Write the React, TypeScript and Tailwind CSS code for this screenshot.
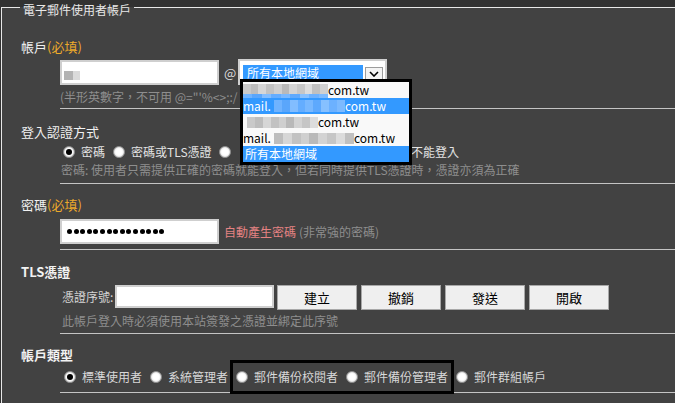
import React from 'react'

const GRAY_BLUR = ['#c9c9c9', '#bdbdbd', '#d6d6d6', '#c2c2c2', '#cfcfcf', '#b9b9b9', '#d3d3d3', '#c6c6c6', '#dcdcdc', '#c0c0c0', '#d0d0d0']
const BLUE_BLUR = ['#6fb3ff', '#5aa6fb', '#82bdff', '#64adff', '#78b8ff', '#5ea9fd', '#86c0ff', '#6cb1ff', '#7cbaff']

function Blur({ colors, width, height = 10 }: { colors: string[]; width: number; height?: number }) {
  const cell = width / colors.length
  return (
    <span className="flex shrink-0" style={{ width, height }}>
      {colors.map((c, i) => (
        <span key={i} style={{ width: cell, height, background: c }} />
      ))}
    </span>
  )
}

function Radio({ checked }: { checked?: boolean }) {
  return (
    <span className="flex h-[12px] w-[12px] shrink-0 items-center justify-center rounded-full border border-[#8a8a8a] bg-white shadow-[inset_0_0_2px_#bbb]">
      {checked && <span className="h-[6px] w-[6px] rounded-full bg-black" />}
    </span>
  )
}

function RadioItem({ label, checked }: { label: string; checked?: boolean }) {
  return (
    <span className="flex items-center gap-[6px]">
      <Radio checked={checked} />
      <span className="whitespace-nowrap">{label}</span>
    </span>
  )
}

function SectionLabel({ children, className }: { children: React.ReactNode; className: string }) {
  return <div className={`ml-[19px] text-[13px] leading-[16px] text-[#f2f2f2] ${className}`}>{children}</div>
}

const BUTTONS = ['建立', '撤銷', '發送', '開啟']

export default function App() {
  return (
    <div className="h-[403px] w-[675px] overflow-hidden bg-[#323232] pl-px pt-[7px] font-['Noto_Sans_CJK_TC','Noto_Sans',sans-serif]">
      <div className="relative h-[420px] w-[740px] border-l border-t border-[#e8e8e8] bg-[#424242]">
        {/* legend */}
        <span className="absolute left-[18px] top-[-6px] bg-[linear-gradient(to_bottom,#323232_5px,#424242_5px)] px-[3px] text-[12px] leading-[16px] text-[#e8e8e8]">
          電子郵件使用者帳戶
        </span>

        {/* 帳戶 */}
        <SectionLabel className="mt-[31px]">
          帳戶<span className="text-[#eeaa2a]">(必填)</span>
        </SectionLabel>
        <div className="ml-[58px] border-b border-[#c4c4c4] pb-[3px]">
          <div className="mt-[5px] flex items-start">
            <div className="flex h-[25px] w-[159px] items-center border-2 border-[#cfcfcf] bg-white pl-[2px]">
              <span className="mt-[5px] flex">
                <span className="h-[9px] w-[9px] bg-[#b3b3b3]" />
                <span className="h-[9px] w-[7px] bg-[#dadada]" />
              </span>
            </div>
            <span className="ml-[5px] mt-[4px] w-[12px] text-[13px] leading-[18px] text-[#dcdcdc]">@</span>
            <div className="relative ml-[2px] mt-[-1px] flex h-[26px] w-[149px] items-start border-2 border-[#cfcfcf] bg-white">
              <span className="ml-[3px] mt-[4px] h-[15px] w-[120px] bg-[#3399ff] pl-[4px] text-[12px] leading-[15px] text-white">
                所有本地網域
              </span>
              <span className="ml-[2px] mt-[6px] flex h-[14px] w-[18px] items-center justify-center border border-[#9c9c9c] bg-[#f4f4f4]">
                <svg width="10" height="6" viewBox="0 0 10 6">
                  <path d="M1 1l4 4 4-4" fill="none" stroke="#000" strokeWidth="1.6" />
                </svg>
              </span>

              {/* open dropdown list */}
              <div className="absolute left-0 top-[18px] z-10 w-[172px] border-[3px] border-black bg-[#f9f9f9] text-[12px] leading-[16px] text-black">
                <div className="flex h-[16px] items-start">
                  <span className="flex flex-col">
                    <span className="mt-[2px]">
                      <Blur colors={GRAY_BLUR} width={85} height={10} />
                    </span>
                    <Blur colors={BLUE_BLUR} width={85} height={4} />
                  </span>
                  <span>com.tw</span>
                </div>
                <div className="flex h-[16px] items-center bg-[#3399ff] text-white">
                  <span>mail.</span>
                  <span className="ml-[3px]">
                    <Blur colors={BLUE_BLUR} width={71} height={12} />
                  </span>
                  <span>com.tw</span>
                </div>
                <div className="flex h-[16px] items-center">
                  <span className="ml-[4px]">
                    <Blur colors={GRAY_BLUR.slice(0, 9)} width={71} height={11} />
                  </span>
                  <span>com.tw</span>
                </div>
                <div className="flex h-[16px] items-center">
                  <span>mail.</span>
                  <span className="ml-[3px]">
                    <Blur colors={GRAY_BLUR.slice(1, 10)} width={80} height={11} />
                  </span>
                  <span>com.tw</span>
                </div>
                <div className="h-[16px] bg-[#3399ff] pl-[2px] text-white">所有本地網域</div>
              </div>
            </div>
          </div>
          <div className="mt-[4px] whitespace-nowrap text-[12px] leading-[16px] text-[#8e8e8e]">
            (半形英數字，不可用 @="'%&lt;&gt;;:/
          </div>
        </div>

        {/* 登入認證方式 */}
        <SectionLabel className="mt-[15px]">登入認證方式</SectionLabel>
        <div className="ml-[58px] border-b border-[#c4c4c4] pb-[5px]">
          <div className="ml-[3px] mt-[4px] flex items-center text-[12px] leading-[16px] text-[#e2e2e2]">
            <RadioItem label="密碼" checked />
            <span className="ml-[8px]">
              <RadioItem label="密碼或TLS憑證" />
            </span>
            <span className="ml-[7px] shrink-0">
              <Radio />
            </span>
            {/* the other options sit under the open list */}
            <span className="ml-auto mr-[282px] whitespace-nowrap">不能登入</span>
          </div>
          <div className="ml-px mt-[2px] whitespace-nowrap text-[12px] leading-[16px] text-[#8e8e8e]">
            密碼: 使用者只需提供正確的密碼就能登入，但若同時提供TLS憑證時，憑證亦須為正確
          </div>
        </div>

        {/* 密碼 */}
        <SectionLabel className="mt-[13px]">
          密碼<span className="text-[#eeaa2a]">(必填)</span>
        </SectionLabel>
        <div className="ml-[58px] border-b border-[#c4c4c4] pb-[5px]">
          <div className="mt-[6px] flex items-center">
            <div className="flex h-[25px] w-[159px] items-center gap-[1.6px] border-2 border-[#cfcfcf] bg-white pl-[5px]">
              {Array.from({ length: 15 }).map((_, i) => (
                <span key={i} className="h-[5px] w-[5px] rounded-full bg-black" />
              ))}
            </div>
            <span className="ml-[5px] text-[12px] leading-[16px] text-[#e58383]">自動產生密碼</span>
            <span className="ml-[3px] text-[12px] leading-[16px] text-[#8e8e8e]">(非常強的密碼)</span>
          </div>
        </div>

        {/* TLS憑證 */}
        <SectionLabel className="mt-[14px] font-bold">TLS憑證</SectionLabel>
        <div className="ml-[58px] border-b border-[#c4c4c4] pb-[4px]">
          <div className="mt-[5px] flex items-start">
            <span className="ml-[2px] mt-[4px] w-[53px] text-[12px] leading-[16px] text-[#d4d4d4]">憑證序號:</span>
            <div className="h-[23px] w-[159px] border-2 border-[#cfcfcf] bg-white" />
            <div className="ml-[3px] flex gap-[4px]">
              {BUTTONS.map(b => (
                <button
                  key={b}
                  className="h-[25px] w-[80px] border border-[#a8a8a8] bg-[#efefef] text-[13px] leading-[16px] text-black"
                >
                  {b}
                </button>
              ))}
            </div>
          </div>
          <div className="ml-[2px] mt-[3px] text-[12px] leading-[16px] text-[#8e8e8e]">
            此帳戶登入時必須使用本站簽發之憑證並綁定此序號
          </div>
        </div>

        {/* 帳戶類型 */}
        <SectionLabel className="mt-[13px] font-bold">帳戶類型</SectionLabel>
        <div className="ml-[58px] border-b border-[#c4c4c4] pb-[7px]">
          <div className="ml-[4px] mt-[6px] flex items-center gap-[8px] text-[12px] leading-[16px] text-[#d8d8d8]">
            <RadioItem label="標準使用者" checked />
            <RadioItem label="系統管理者" />
            <span className="-mx-[6px] -my-[9px] flex items-center gap-[8px] border-[3px] border-black px-[3px] py-[6px]">
              <RadioItem label="郵件備份校閱者" />
              <RadioItem label="郵件備份管理者" />
            </span>
            <RadioItem label="郵件群組帳戶" />
          </div>
        </div>
      </div>
    </div>
  )
}
